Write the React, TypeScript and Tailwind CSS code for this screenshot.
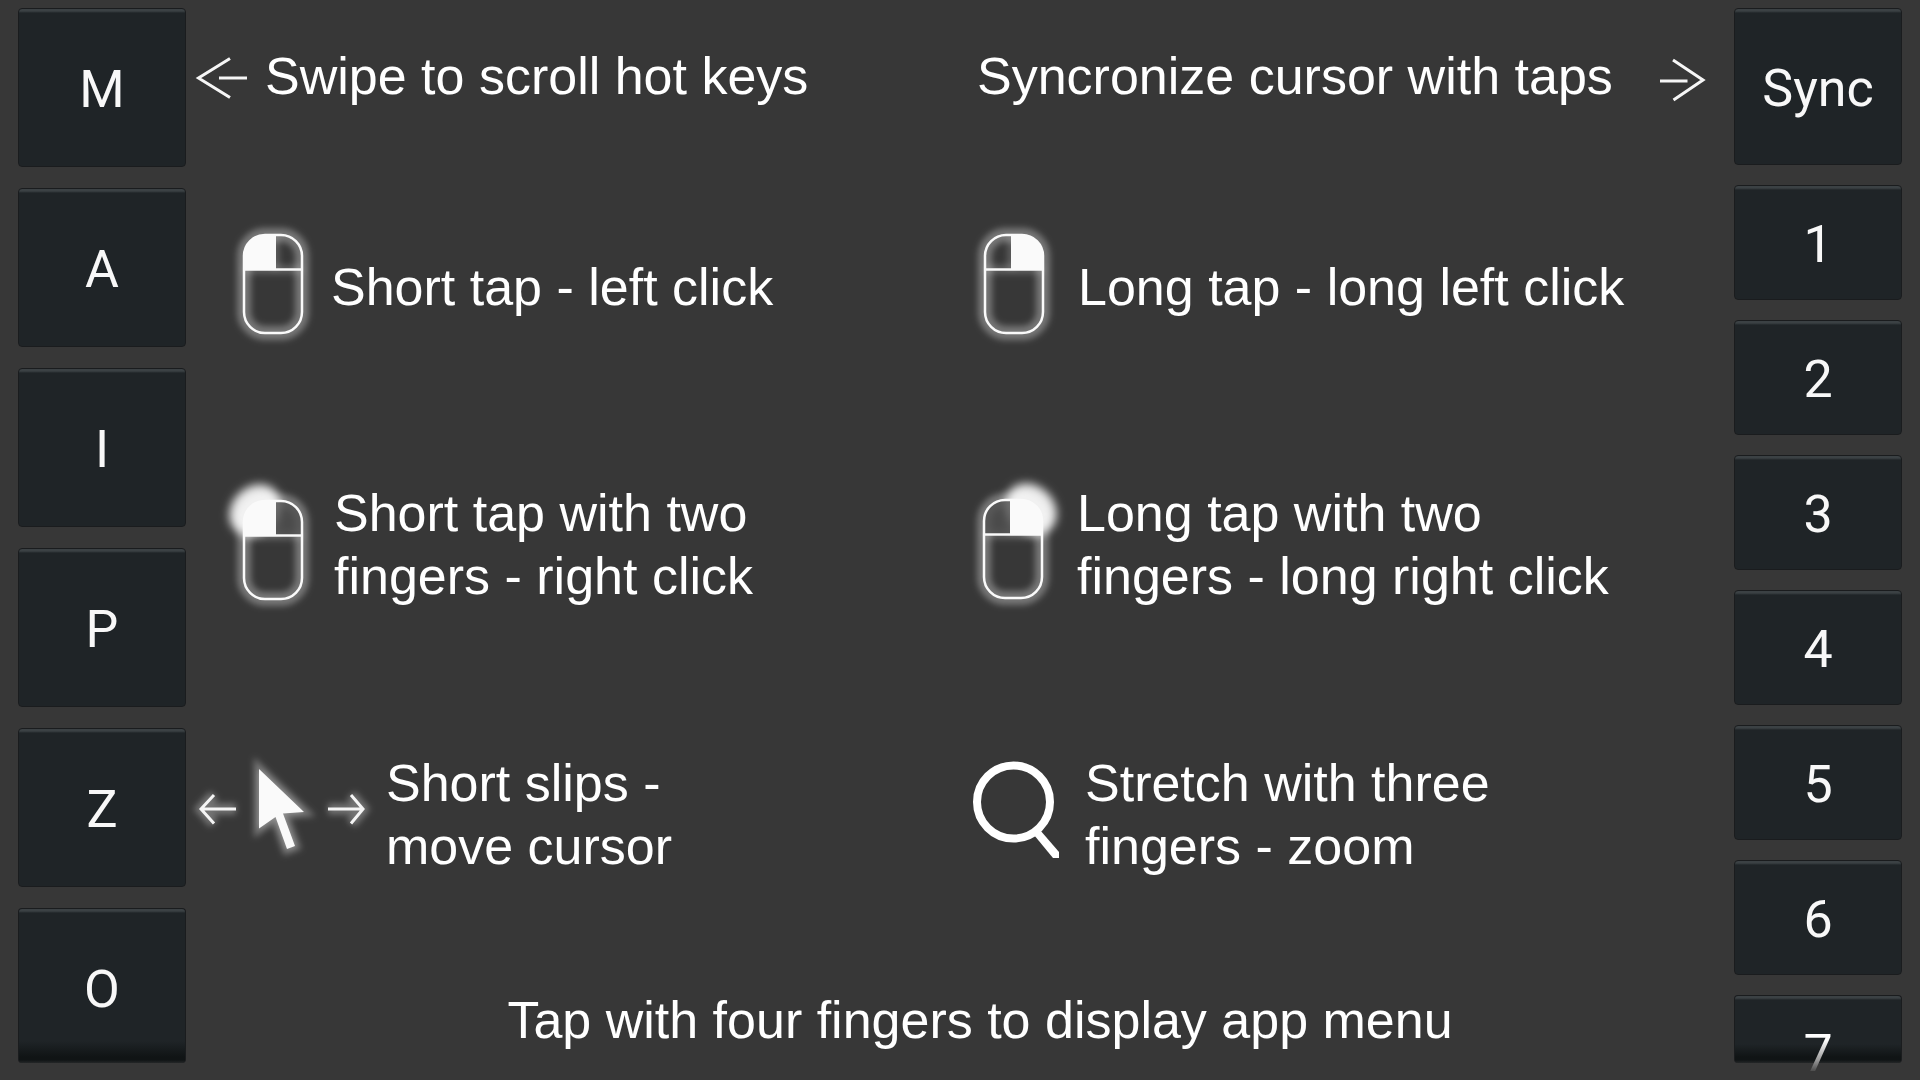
import type { ReactNode } from "react";

const leftKeys = ["M", "A", "I", "P", "Z"];
const rightKeys = ["1", "2", "3", "4", "5", "6"];

const keyBase =
  "flex w-full shrink-0 justify-center rounded-[4px] border border-[#1a1c1e] bg-[linear-gradient(#3b4144,#3b4144_2px,#1f2427_4px,#1f2427)] text-[#f8f8f8]";

function Key({ label, size }: { label: string; size: string }) {
  return (
    <button type="button" className={`${keyBase} items-center pt-1 leading-[60px] ${size}`}>
      {label}
    </button>
  );
}

function Glow({ id, blur, children }: { id: string; blur: number; children: ReactNode }) {
  return (
    <>
      <defs>
        <filter id={id} x="-50%" y="-50%" width="200%" height="200%">
          <feGaussianBlur stdDeviation={blur} />
        </filter>
      </defs>
      <g filter={`url(#${id})`}>{children}</g>
    </>
  );
}

const mouseBody = "M42 20H58A21 21 0 0 1 79 41V97A21 21 0 0 1 58 118H42A21 21 0 0 1 21 97V41A21 21 0 0 1 42 20Z";

function Mouse({ id, right = false, flare = false }: { id: string; right?: boolean; flare?: boolean }) {
  const dy = flare ? (right ? 5 : 6) : -2;
  return (
    <svg className="h-[140px] w-[100px] shrink-0 overflow-visible" viewBox="0 0 100 140" fill="none" aria-hidden="true">
      <g transform={right ? `translate(101 ${dy}) scale(-1 1)` : `translate(0 ${dy})`}>
        <Glow id={id} blur={3}>
          <path d={mouseBody} stroke="#fff" strokeWidth="14" strokeOpacity="0.32" />
          <path d="M21 54.500H79" stroke="#fff" strokeWidth="9" strokeOpacity="0.2" />
          <path d="M52 22V54" stroke="#fff" strokeWidth="9" strokeOpacity="0.2" />
        </Glow>
        {flare && (
          <Glow id={`${id}-flare`} blur={5}>
            <ellipse cx="32" cy="29" rx="28" ry="23" transform="rotate(-45 32 29)" fill="#fff" fillOpacity="0.9" />
          </Glow>
        )}
        {flare && <path d="M53 21H60A18 18 0 0 1 78 39V54H53Z" fill="#505050" fillOpacity="0.8" />}
        <path d="M42 20H53V55H21V41A21 21 0 0 1 42 20Z" fill="#fafafa" />
        <path d={mouseBody} stroke="#fafafa" strokeWidth="2.500" />
        <path d="M21 54.500H79" stroke="#fafafa" strokeWidth="2.500" />
      </g>
    </svg>
  );
}

function HeadArrow({ right = false }: { right?: boolean }) {
  return (
    <svg className="h-16 w-[60px] shrink-0" viewBox="0 0 60 64" fill="none" stroke="#f6f6f6" strokeWidth="3" aria-hidden="true">
      {right ? <path d="M17 16L47 36L17.500 56M4 37H31.500" /> : <path d="M36 14.500L4.500 34L36 53.500M25 34H53" />}
    </svg>
  );
}

function Cursor() {
  const arrows = "M28 44L15 58L28 72.500M15 58H50M165 44L177 58L165 72.500M177 58H142";
  const pointer = "M73 18L118 61L97 62.500L109 95L101 98L89.500 66L73 77.500Z";
  return (
    <svg className="h-32 w-[200px] shrink-0" viewBox="0 0 200 128" aria-hidden="true">
      <Glow id="cursor-glow" blur={3}>
        <path d={arrows} fill="none" stroke="#fff" strokeWidth="11" strokeOpacity="0.3" />
        <path d={pointer} fill="#fff" fillOpacity="0.3" stroke="#fff" strokeWidth="10" strokeOpacity="0.3" />
      </Glow>
      <path d={arrows} fill="none" stroke="#f4f4f4" strokeWidth="3" />
      <path d={pointer} fill="#fafafa" />
    </svg>
  );
}

function Magnifier() {
  return (
    <svg className="h-32 w-[110px] shrink-0" viewBox="0 0 110 128" fill="none" aria-hidden="true">
      <circle cx="53.500" cy="51" r="36.500" stroke="#fff" strokeWidth="8" />
      <path d="M74 84L80 79L99 101V107H93Z" fill="#fff" />
    </svg>
  );
}

export default function App() {
  return (
    <div className="flex min-h-screen w-full bg-[#373737] px-[18px] pt-2 font-['Roboto',sans-serif] text-[52px] text-white">
      <nav className="flex w-[168px] shrink-0 flex-col gap-[21px]" aria-label="Hot keys">
        {leftKeys.map((k) => (
          <Key key={k} label={k} size="h-[159px]" />
        ))}
        <button
          type="button"
          className="flex h-[155px] w-full shrink-0 items-start justify-center rounded-[4px] border border-b-0 border-[#1a1c1e] bg-[linear-gradient(#3b4144,#3b4144_2px,#1f2427_4px,#1f2427_132px,#101415_148px,#101415_151px,#2b2d2e_155px)] pt-[51px] leading-[60px] text-[#f8f8f8]"
        >
          O
        </button>
      </nav>

      <main className="flex min-w-0 flex-1 flex-col pt-9 font-['Liberation_Sans',Arial,sans-serif] leading-[63px] whitespace-nowrap">
        <div className="grid grid-cols-2">
          <div className="flex items-center gap-[11px] pl-2">
            <HeadArrow />
            <p>Swipe to scroll hot keys</p>
          </div>
          <div className="flex items-center justify-between pr-[18px] pl-[17px]">
            <p>Syncronize cursor with taps</p>
            <HeadArrow right />
          </div>
        </div>

        <div className="mt-[109px] grid grid-cols-2">
          <div className="flex items-center gap-2 pl-[37px]">
            <Mouse id="short-left" />
            <p>Short tap - left click</p>
          </div>
          <div className="flex items-center gap-[15px] pl-[3px]">
            <Mouse id="long-left" right />
            <p>Long tap - long left click</p>
          </div>
        </div>

        <div className="mt-[118px] grid grid-cols-2">
          <div className="flex items-center gap-[11px] pl-[37px]">
            <Mouse id="short-right" flare />
            <p>
              Short tap with two
              <br />
              fingers - right click
            </p>
          </div>
          <div className="flex items-center gap-[15px] pl-[2px]">
            <Mouse id="long-right" right flare />
            <p>
              Long tap with two
              <br />
              fingers - long right click
            </p>
          </div>
        </div>

        <div className="mt-[136px] grid grid-cols-2">
          <div className="flex items-center">
            <Cursor />
            <p>
              Short slips -<br />
              move cursor
            </p>
          </div>
          <div className="flex items-center gap-[15px]">
            <Magnifier />
            <p>
              Stretch with three
              <br />
              fingers - zoom
            </p>
          </div>
        </div>

        <p className="mt-[110px] pl-10 text-center">Tap with four fingers to display app menu</p>
      </main>

      <aside className="flex w-[168px] shrink-0 flex-col gap-5" aria-label="Number keys">
        <Key label="Sync" size="h-[157px]" />
        {rightKeys.map((k) => (
          <Key key={k} label={k} size="h-[115px]" />
        ))}
        <button
          type="button"
          className="flex h-[68px] w-full shrink-0 items-start justify-center rounded-[4px] border border-b-0 border-[#1a1c1e] bg-[linear-gradient(#3b4144,#3b4144_2px,#1f2427_4px,#1f2427_48px,#101415_61px,#101415_64px,#2b2d2e_68px)] pt-[34px] leading-[48px]"
        >
          <span className="block bg-[linear-gradient(#fff_10px,#999_30px,#2a2a2a_46px)] bg-clip-text text-transparent">7</span>
        </button>
      </aside>
    </div>
  );
}
